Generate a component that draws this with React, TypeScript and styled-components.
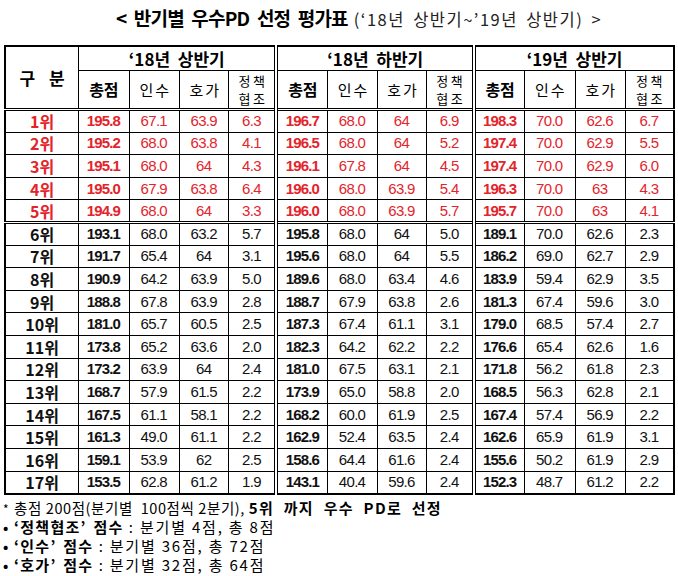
import React from 'react'
import styled, { createGlobalStyle } from 'styled-components'

const GlobalStyle = createGlobalStyle`
    html, body {
        margin: 0;
        padding: 0;
        background: #ffffff;
    }
    body {
        font-family: 'Noto Sans CJK KR', 'Liberation Sans', sans-serif;
        color: #000000;
    }
`

const RED = '#e3242b'

type Group = [string, string, string, string]

interface IRow {
    rank: string
    groups: [Group, Group, Group]
}

const rows: IRow[] = [
    { rank: '1위', groups: [['195.8', '67.1', '63.9', '6.3'], ['196.7', '68.0', '64', '6.9'], ['198.3', '70.0', '62.6', '6.7']] },
    { rank: '2위', groups: [['195.2', '68.0', '63.8', '4.1'], ['196.5', '68.0', '64', '5.2'], ['197.4', '70.0', '62.9', '5.5']] },
    { rank: '3위', groups: [['195.1', '68.0', '64', '4.3'], ['196.1', '67.8', '64', '4.5'], ['197.4', '70.0', '62.9', '6.0']] },
    { rank: '4위', groups: [['195.0', '67.9', '63.8', '6.4'], ['196.0', '68.0', '63.9', '5.4'], ['196.3', '70.0', '63', '4.3']] },
    { rank: '5위', groups: [['194.9', '68.0', '64', '3.3'], ['196.0', '68.0', '63.9', '5.7'], ['195.7', '70.0', '63', '4.1']] },
    { rank: '6위', groups: [['193.1', '68.0', '63.2', '5.7'], ['195.8', '68.0', '64', '5.0'], ['189.1', '70.0', '62.6', '2.3']] },
    { rank: '7위', groups: [['191.7', '65.4', '64', '3.1'], ['195.6', '68.0', '64', '5.5'], ['186.2', '69.0', '62.7', '2.9']] },
    { rank: '8위', groups: [['190.9', '64.2', '63.9', '5.0'], ['189.6', '68.0', '63.4', '4.6'], ['183.9', '59.4', '62.9', '3.5']] },
    { rank: '9위', groups: [['188.8', '67.8', '63.9', '2.8'], ['188.7', '67.9', '63.8', '2.6'], ['181.3', '67.4', '59.6', '3.0']] },
    { rank: '10위', groups: [['181.0', '65.7', '60.5', '2.5'], ['187.3', '67.4', '61.1', '3.1'], ['179.0', '68.5', '57.4', '2.7']] },
    { rank: '11위', groups: [['173.8', '65.2', '63.6', '2.0'], ['182.3', '64.2', '62.2', '2.2'], ['176.6', '65.4', '62.6', '1.6']] },
    { rank: '12위', groups: [['173.2', '63.9', '64', '2.4'], ['181.0', '67.5', '63.1', '2.1'], ['171.8', '56.2', '61.8', '2.3']] },
    { rank: '13위', groups: [['168.7', '57.9', '61.5', '2.2'], ['173.9', '65.0', '58.8', '2.0'], ['168.5', '56.3', '62.8', '2.1']] },
    { rank: '14위', groups: [['167.5', '61.1', '58.1', '2.2'], ['168.2', '60.0', '61.9', '2.5'], ['167.4', '57.4', '56.9', '2.2']] },
    { rank: '15위', groups: [['161.3', '49.0', '61.1', '2.2'], ['162.9', '52.4', '63.5', '2.4'], ['162.6', '65.9', '61.9', '3.1']] },
    { rank: '16위', groups: [['159.1', '53.9', '62', '2.5'], ['158.6', '64.4', '61.6', '2.4'], ['155.6', '50.2', '61.9', '2.9']] },
    { rank: '17위', groups: [['153.5', '62.8', '61.2', '1.9'], ['143.1', '40.4', '59.6', '2.4'], ['152.3', '48.7', '61.2', '2.2']] }
]

const periods = ['‘18년  상반기', '‘18년  하반기', '‘19년  상반기']

const colWidths = [73, 50, 50, 49, 47, 51, 49, 49, 47, 50, 50, 50, 48]

const Page = styled.div`
    width: 678px;
    padding-top: 4px;
`

const Title = styled.div`
    display: flex;
    justify-content: center;
    align-items: baseline;
    height: 30px;
    padding-left: 40px;
    gap: 6px;
`

const TitleMain = styled.span`
    font-size: 19px;
    font-weight: 700;
    letter-spacing: -0.8px;
    word-spacing: 4px;
`

const TitleSub = styled.span`
    font-size: 16.5px;
    font-weight: 400;
    color: #222;
    letter-spacing: 1.5px;
    word-spacing: 3px;
`

const Table = styled.table`
    margin: 11px 0 0 4px;
    width: 671px;
    table-layout: fixed;
    border-collapse: collapse;
    border: 2px solid #000;
`

const HeadCell = styled.th<{ $bold?: boolean; $groupEnd?: boolean; $h: number }>`
    height: ${ p => p.$h }px;
    padding: 0;
    border: 1px solid #000;
    border-right: ${ p => p.$groupEnd ? '4px double #000' : '1px solid #000' };
    font-size: 16px;
    font-weight: ${ p => p.$bold ? 700 : 400 };
    line-height: 17px;
    text-align: center;
    vertical-align: middle;
`

const PeriodHead = styled(HeadCell)`
    font-size: 17px;
    white-space: pre;
`

const RankHead = styled(HeadCell)`
    font-size: 17px;
    word-spacing: 10px;
    border-bottom: 3px double #000;
`

const SmallHead = styled(HeadCell)`
    font-size: 15px;
    letter-spacing: 2px;
    padding-left: 2px;
`

const PolicyHead = styled(HeadCell)`
    font-size: 13px;
    line-height: 18px;
    letter-spacing: 2.5px;
    padding-left: 2px;
`

const SubHeadRow = styled.tr`
    th {
        border-bottom: 3px double #000;
    }
`

const BodyRow = styled.tr<{ $red?: boolean; $sep?: boolean }>`
    height: 22.6px;
    color: ${ p => p.$red ? RED : '#111' };
    td {
        border-bottom: ${ p => p.$sep ? '3px double #000' : '1px solid #000' };
    }
`

const RankCell = styled.td`
    padding: 0;
    border: 1px solid #000;
    font-size: 16px;
    font-weight: 700;
    text-align: center;
    line-height: 20px;
`

const NumCell = styled.td<{ $bold?: boolean; $groupEnd?: boolean }>`
    padding: 0 1px 0 0;
    border: 1px solid #000;
    border-right: ${ p => p.$groupEnd ? '4px double #000' : '1px solid #000' };
    font-family: 'Liberation Sans', Arial, sans-serif;
    font-size: 15px;
    font-weight: ${ p => p.$bold ? 700 : 400 };
    letter-spacing: ${ p => p.$bold ? '-0.9px' : '-0.7px' };
    text-align: center;
    line-height: 20px;
`

const Notes = styled.div`
    margin: 3px 0 0 3px;
    display: flex;
    flex-direction: column;
`

const Note = styled.div<{ $wide?: boolean }>`
    display: flex;
    align-items: baseline;
    height: 19px;
    font-size: ${ p => p.$wide ? '15px' : '14.5px' };
    line-height: 19px;
    letter-spacing: ${ p => p.$wide ? '1.8px' : '0.6px' };
    white-space: pre;
`

const Bullet = styled.span<{ $bold?: boolean }>`
    width: 11px;
    font-size: ${ p => p.$bold ? '14px' : '12px' };
    font-weight: ${ p => p.$bold ? 700 : 400 };
`

const B = styled.b<{ $gap?: number }>`
    font-size: 15px;
    font-weight: 700;
    letter-spacing: 1.3px;
    word-spacing: ${ p => p.$gap ?? 2 }px;
`

export default function App() {
    return (
        <Page>
            <GlobalStyle />
            <Title>
                <TitleMain>&lt; 반기별 우수PD 선정 평가표</TitleMain>
                <TitleSub>(‘18년 상반기~’19년 상반기) &gt;</TitleSub>
            </Title>
            <Table>
                <colgroup>
                    { colWidths.map((w, i) => <col key={ i } style={ { width: w } } />) }
                </colgroup>
                <thead>
                    <tr>
                        <RankHead rowSpan={ 2 } $bold $h={ 23 }>구 분</RankHead>
                        { periods.map((p, i) => (
                            <PeriodHead key={ p } colSpan={ 4 } $bold $groupEnd={ i < 2 } $h={ 23 }>
                                { p }
                            </PeriodHead>
                        )) }
                    </tr>
                    <SubHeadRow>
                        { periods.map((p, i) => (
                            <React.Fragment key={ p }>
                                <HeadCell $bold $h={ 37 }>총점</HeadCell>
                                <SmallHead $h={ 37 }>인수</SmallHead>
                                <SmallHead $h={ 37 }>호가</SmallHead>
                                <PolicyHead $h={ 37 } $groupEnd={ i < 2 }>정책<br />협조</PolicyHead>
                            </React.Fragment>
                        )) }
                    </SubHeadRow>
                </thead>
                <tbody>
                    { rows.map((r, ri) => (
                        <BodyRow key={ r.rank } $red={ ri < 5 } $sep={ ri === 4 }>
                            <RankCell>{ r.rank }</RankCell>
                            { r.groups.map((g, gi) => g.map((v, vi) => (
                                <NumCell key={ `${ gi }-${ vi }` } $bold={ vi === 0 } $groupEnd={ vi === 3 && gi < 2 }>
                                    { v }
                                </NumCell>
                            ))) }
                        </BodyRow>
                    )) }
                </tbody>
            </Table>
            <Notes>
                <Note>
                    <Bullet>*</Bullet>총점 200점(분기별  100점씩 2분기), <B $gap={ 5 }>5위 까지 우수 PD로 선정</B>
                </Note>
                <Note $wide>
                    <Bullet $bold>•</Bullet><B>‘정책협조’ 점수</B> : 분기별 4점, 총 8점
                </Note>
                <Note $wide>
                    <Bullet $bold>•</Bullet><B>‘인수’ 점수</B> : 분기별 36점, 총 72점
                </Note>
                <Note $wide>
                    <Bullet $bold>•</Bullet><B>‘호가’ 점수</B> : 분기별 32점, 총 64점
                </Note>
            </Notes>
        </Page>
    )
}
